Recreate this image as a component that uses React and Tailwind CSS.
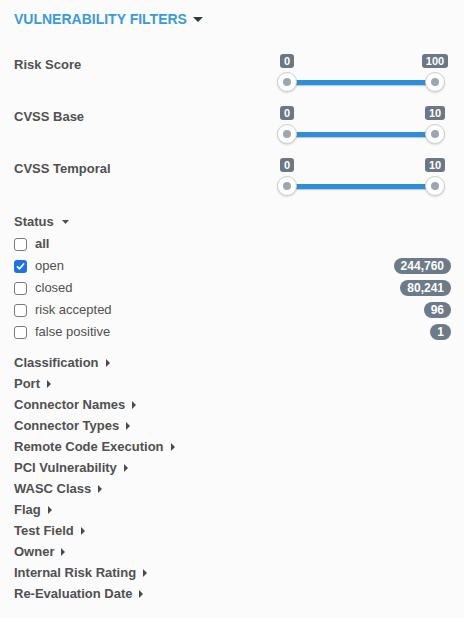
import React from "react";

const CaretDown = ({ w = 10, h = 5, color = "#2f3a45" }) => (
  <svg width={w} height={h} viewBox={`0 0 ${w} ${h}`} className="block">
    <polygon points={`0,0 ${w},0 ${w / 2},${h}`} fill={color} />
  </svg>
);

const CaretRight = () => (
  <svg width="4" height="8" viewBox="0 0 4 8" className="block">
    <polygon points="0,0 4,4 0,8" fill="#4a4a4a" />
  </svg>
);

function Slider({ max }) {
  return (
    <div className="relative h-[52px] w-[168px]">
      <div className="absolute left-[10px] right-[10px] top-[28px] h-[5px] bg-[#2d8fd9] shadow-[0_1px_1px_rgba(0,0,0,0.2)]" />
      {[
        { left: "left-0", label: "0" },
        { left: "left-[148px]", label: String(max) },
      ].map((h, i) => (
        <div key={i} className={`absolute top-[2px] ${h.left} w-[20px] flex flex-col items-center`}>
          <div className="h-[14px] px-[4px] rounded-[3px] bg-[#6b7785] text-white text-[11px] font-bold leading-[14px] whitespace-nowrap">
            {h.label}
          </div>
          <div className="mt-[4px] w-[20px] h-[20px] rounded-full bg-white border border-[#cfcfcf] shadow-[0_1px_2px_rgba(0,0,0,0.15)] flex items-center justify-center">
            <div className="w-[8px] h-[8px] rounded-full bg-[#9ea7b1]" />
          </div>
        </div>
      ))}
    </div>
  );
}

function Checkbox({ checked }) {
  if (checked) {
    return (
      <div className="w-[13px] h-[13px] rounded-[3px] bg-[#1f72e6] flex items-center justify-center">
        <svg width="9" height="9" viewBox="0 0 9 9">
          <path d="M1.5 4.8 L3.6 6.8 L7.6 2" fill="none" stroke="white" strokeWidth="1.7" strokeLinecap="round" strokeLinejoin="round" />
        </svg>
      </div>
    );
  }
  return <div className="w-[13px] h-[13px] rounded-[3px] border border-[#7a7a7a] bg-white" />;
}

const statuses = [
  { label: "all", bold: true },
  { label: "open", checked: true, count: "244,760" },
  { label: "closed", count: "80,241" },
  { label: "risk accepted", count: "96" },
  { label: "false positive", count: "1" },
];

const sections = [
  "Classification",
  "Port",
  "Connector Names",
  "Connector Types",
  "Remote Code Execution",
  "PCI Vulnerability",
  "WASC Class",
  "Flag",
  "Test Field",
  "Owner",
  "Internal Risk Rating",
  "Re-Evaluation Date",
];

export default function App() {
  return (
    <div
      className="min-h-screen w-[464px] bg-[#fbfbfb] pl-[14px] pr-[13px] text-[13px] text-[#505050]"
      style={{ fontFamily: '"Liberation Sans", Arial, sans-serif' }}
    >
      <div className="h-[38px] flex items-center gap-[6px]">
        <span className="text-[14px] font-bold text-[#3b9ad9] uppercase leading-none">Vulnerability Filters</span>
        <CaretDown w={10} h={5} />
      </div>

      <div className="mt-[14px]">
        {[
          { label: "Risk Score", max: 100 },
          { label: "CVSS Base", max: 10 },
          { label: "CVSS Temporal", max: 10 },
        ].map((s) => (
          <div key={s.label} className="h-[52px] flex justify-between">
            <div className="pt-[5px] leading-[16px] font-bold">{s.label}</div>
            <div className="mr-[6px]">
              <Slider max={s.max} />
            </div>
          </div>
        ))}
      </div>

      <div className="mt-[3px] h-[22px] flex items-center gap-[8px]">
        <span className="font-bold">Status</span>
        <CaretDown w={7} h={4} color="#505050" />
      </div>
      {statuses.map((s) => (
        <div key={s.label} className="h-[22px] flex items-center">
          <Checkbox checked={s.checked} />
          <span className={`ml-[8px] ${s.bold ? "font-bold" : ""}`}>{s.label}</span>
          {s.count && (
            <span className="ml-auto h-[16px] px-[7px] rounded-full bg-[#6d7a88] text-white text-[12px] font-bold leading-[16px]">
              {s.count}
            </span>
          )}
        </div>
      ))}

      <div className="mt-[9px]">
        {sections.map((s) => (
          <div key={s} className="h-[21px] flex items-center gap-[7px]">
            <span className="font-bold">{s}</span>
            <CaretRight />
          </div>
        ))}
      </div>
    </div>
  );
}
